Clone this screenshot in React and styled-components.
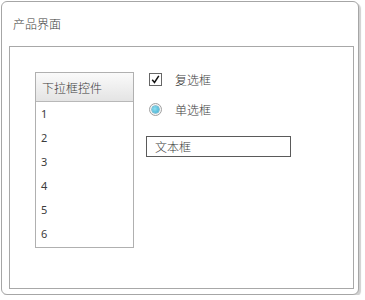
import React from "react";
import styled, { createGlobalStyle } from "styled-components";

const Global = createGlobalStyle`
  html, body { margin: 0; padding: 0; background: #ffffff; }
  body { font-family: "Noto Sans", "Noto Sans CJK SC", sans-serif; color: #3c3c3c; }
`;

const Window = styled.div`
  box-sizing: border-box;
  margin: 1px 0 0 1px;
  width: 358px;
  height: 294px;
  border: 1px solid #a6a6a6;
  border-radius: 6px;
  box-shadow: 2px 2px 1px #d0d0d0;
  background: #fff;
  padding: 0 4px 5px 7px;
  display: flex;
  flex-direction: column;
`;

const Title = styled.div`
  height: 44px;
  display: flex;
  align-items: center;
  padding-left: 4px;
  font-family: "Noto Sans CJK SC", sans-serif;
  font-weight: 300;
  font-size: 12px;
  color: #3c3c3c;
  padding-bottom: 2px;
  box-sizing: border-box;
`;

const Canvas = styled.div`
  box-sizing: border-box;
  flex: 1;
  border: 1px solid #a8a8a8;
  padding: 25px;
  display: flex;
  gap: 12px;
  align-items: flex-start;
`;

const ListBox = styled.div`
  box-sizing: border-box;
  width: 99px;
  height: 176px;
  border: 1px solid #b0b0b0;
  display: flex;
  flex-direction: column;
`;

const ListHeader = styled.div`
  box-sizing: border-box;
  height: 29px;
  border-bottom: 1px solid #b8b8b8;
  background: linear-gradient(#fafafa, #e4e4e4);
  display: flex;
  align-items: center;
  padding-left: 6px;
  font-family: "Noto Sans CJK SC", sans-serif;
  font-weight: 300;
  font-size: 12px;
  color: #3c3c3c;
`;

const ListItem = styled.div`
  height: 24px;
  display: flex;
  align-items: center;
  padding-left: 5px;
  padding-bottom: 1px;
  box-sizing: border-box;
  font-family: "Noto Sans", sans-serif;
  font-size: 11px;
  color: #3c3c3c;
`;

const Controls = styled.div`
  display: flex;
  flex-direction: column;
`;

const OptionRow = styled.div`
  height: 14px;
  margin-top: ${(p) => p.$top}px;
  display: flex;
  align-items: center;
  padding-left: 3px;
  gap: 13px;
  font-family: "Noto Sans CJK SC", sans-serif;
  font-weight: 300;
  font-size: 12px;
  color: #3c3c3c;
`;

const Box = styled.span`
  box-sizing: border-box;
  width: 13px;
  height: 13px;
  border: 1px solid #666;
  background: #fff;
  display: flex;
  align-items: center;
  justify-content: center;
`;

const Radio = styled.span`
  box-sizing: border-box;
  width: 13px;
  height: 13px;
  border-radius: 50%;
  border: 1px solid #a0a0a0;
  background: #f6f6f6;
  display: flex;
  align-items: center;
  justify-content: center;
  &::after {
    content: "";
    width: 7px;
    height: 7px;
    border-radius: 50%;
    background: radial-gradient(circle at 40% 40%, #8fe0f2, #3aa9cc);
    box-shadow: 0 0 0 0.5px #2d8fb0;
  }
`;

const TextBox = styled.div`
  box-sizing: border-box;
  margin-top: 20px;
  width: 145px;
  height: 21px;
  border: 1px solid #5a5a5a;
  display: flex;
  align-items: center;
  padding-left: 8px;
  font-family: "Noto Sans CJK SC", sans-serif;
  font-weight: 300;
  font-size: 12px;
  color: #3c3c3c;
`;

export default function App() {
  return (
    <>
      <Global />
      <Window>
        <Title>产品界面</Title>
        <Canvas>
          <ListBox>
            <ListHeader>下拉框控件</ListHeader>
            {[1, 2, 3, 4, 5, 6].map((n) => (
              <ListItem key={n}>{n}</ListItem>
            ))}
          </ListBox>
          <Controls>
            <OptionRow $top={0}>
              <Box>
                <svg width="9" height="9" viewBox="0 0 9 9">
                  <path d="M1.2 4.8 L3.5 7.5 L7.8 0.8" fill="none" stroke="#111" strokeWidth="1.5" />
                </svg>
              </Box>
              复选框
            </OptionRow>
            <OptionRow $top={16}>
              <Radio />
              单选框
            </OptionRow>
            <TextBox>文本框</TextBox>
          </Controls>
        </Canvas>
      </Window>
    </>
  );
}
